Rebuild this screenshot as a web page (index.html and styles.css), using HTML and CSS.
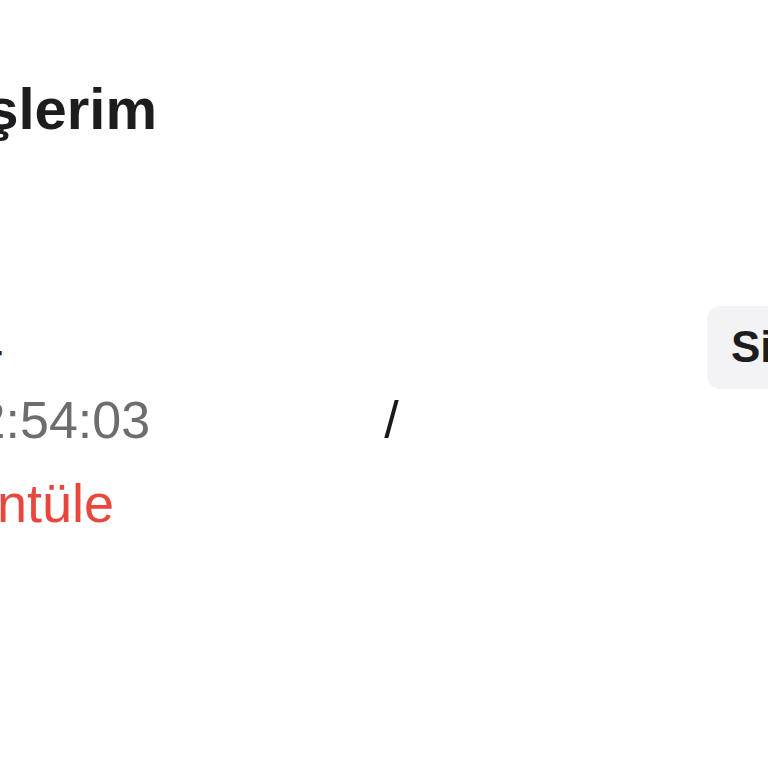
FILE: index.html
```html
<!DOCTYPE html>
<html lang="tr">
<head>
  <meta charset="utf-8">
  <title>Siparişlerim</title>
  <link rel="stylesheet" href="styles.css">
</head>
<body class="body">
  <div class="page">
    <h1 class="title">Siparişlerim</h1>
    <div class="order">
      <div class="order-head">
        <span class="order-no">No: 1234</span>
        <a class="btn-detail" href="#">Sipariş Detayı</a>
      </div>
      <div class="order-date">
        <span class="date">12.03.2024 12:54:03</span>
        <span class="sep">/</span>
      </div>
      <a class="view-link" href="#">Görüntüle</a>
    </div>
  </div>
</body>
</html>
```

FILE: styles.css
```css
html, body {
  margin: 0;
  padding: 0;
  background-color: #ffffff;
  overflow: hidden;
}

.body {
  font-family: "Liberation Sans", Arial, sans-serif;
  color: #1d1d1f;
}

/* la page est plus large que l'ecran, on voit seulement le milieu */
.page {
  margin-left: -165px;
  width: 1400px;
}

.title {
  margin: 0 0 0 -10px;
  padding-top: 74px;
  font-size: 58px;
  line-height: 1.2;
  font-weight: bold;
  color: #1d1d1f;
}

.order {
  margin-top: 162px;
}

.order-head {
  display: flex;
  align-items: center;
  height: 83px;
}

.order-no {
  width: 876px;
  margin-left: -4px;
  flex: none;
  font-size: 41px;
  font-weight: bold;
}

.btn-detail {
  display: flex;
  align-items: center;
  height: 83px;
  padding: 0 24px;
  border-radius: 14px;
  background-color: #f3f3f5;
  color: #1d1d1f;
  font-size: 44px;
  font-weight: bold;
  text-decoration: none;
}

.order-date {
  display: flex;
  font-size: 52px;
  line-height: 1.2;
}

.date {
  margin-left: -162px;
  color: #6d6d6d;
}

.sep {
  margin-left: 234px;
  color: #1a1a1a;
}

.view-link {
  display: block;
  margin-top: 20px;
  margin-left: 42px;
  font-size: 54px;
  line-height: 1.2;
  color: #e9473d;
  text-decoration: none;
}
```
